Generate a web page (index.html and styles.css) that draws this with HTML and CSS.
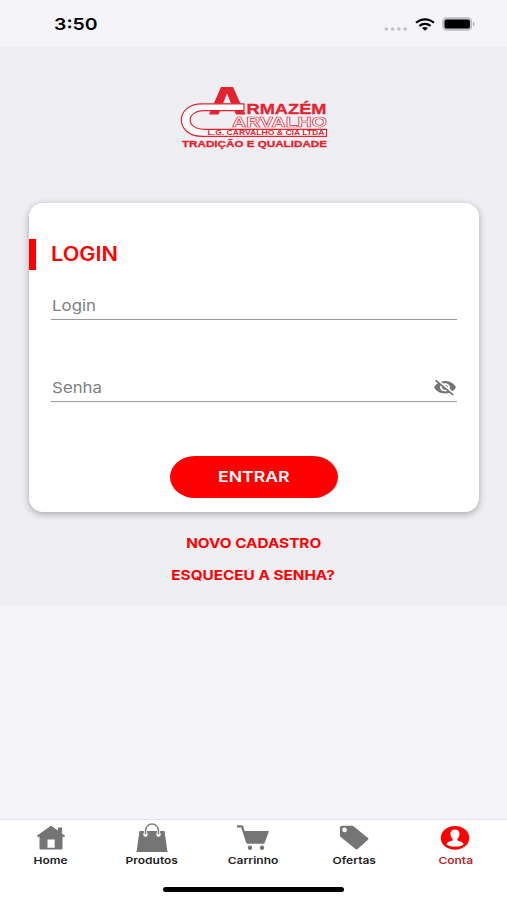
FILE: index.html
```html
<!DOCTYPE html>
<html lang="pt-BR">
<head>
    <meta charset="UTF-8" />
    <title>Login</title>
    <link rel="stylesheet" href="styles.css">
</head>
<body>
<div class="app">
    <header class="status-bar">
        <span class="time">3:50</span>
        <div class="status-icons">
            <svg class="dots" width="24" height="4" viewBox="0 0 24 4" fill="#c0c0c5">
                <circle cx="2.3" cy="2" r="1.8"/><circle cx="8.6" cy="2" r="1.8"/><circle cx="14.9" cy="2" r="1.8"/><circle cx="21.2" cy="2" r="1.8"/>
            </svg>
            <svg class="wifi" width="20" height="13" viewBox="0 0 20 13">
                <g fill="none" stroke="#000" stroke-width="2.2">
                    <path d="M1.1 4.8C6.2.1 13.8.1 18.9 4.8"/>
                    <path d="M4.4 8C7.6 5.1 12.4 5.1 15.6 8"/>
                </g>
                <path d="M7 10.1c1.8-1.6 4.2-1.6 6 0L10 12.7z"/>
            </svg>
            <svg class="battery" width="33" height="14" viewBox="0 0 33 14">
                <rect x=".8" y=".8" width="28.8" height="12.4" rx="4" fill="#c6c6ca" stroke="#bcbcc0" stroke-width="1.2"/>
                <rect x="2.5" y="2.4" width="25.4" height="9.2" rx="2.2"/>
                <path d="M31 4.7c2 .7 2 3.9 0 4.6z" fill="#b5b5ba"/>
            </svg>
        </div>
    </header>

    <main class="content">
        <svg class="logo" width="150" height="66" viewBox="0 0 150 66">
            <path d="M29 28.500L41 1h12l12.500 27.500h-9.500L53.500 22.500H41L38.500 28.500z" fill="#e32430"/>
            <path d="M43 17.500L47 7.500l4 10z" fill="#eeeef3"/>
            <path d="M64 17.800H22C-5.500 17.800-5.500 50.300 22 50.300H146.500V43.300H24C5.500 43.300 5.500 24.700 24 24.700H64z" fill="#fff" stroke="#e32430" stroke-width="1.200"/>
            <g class="logo-text">
                <text class="thick" x="66.500" y="28.300" font-size="15" textLength="80" lengthAdjust="spacingAndGlyphs">RMAZÉM</text>
                <text class="outline" x="52" y="40.800" font-size="14" textLength="95" lengthAdjust="spacingAndGlyphs">ARVALHO</text>
                <text x="27.500" y="49.400" font-size="7" textLength="117" lengthAdjust="spacingAndGlyphs">L.G. CARVALHO &amp; CIA LTDA</text>
                <text class="thick" x="2" y="60.500" font-size="9.800" textLength="145" lengthAdjust="spacingAndGlyphs">TRADIÇÃO E QUALIDADE</text>
            </g>
        </svg>

        <form class="card">
            <h1 class="title"><span>LOGIN</span></h1>
            <div class="field">
                <label>Login</label>
            </div>
            <div class="field">
                <label>Senha</label>
                <svg class="eye" width="22" height="17" viewBox="1 2 22 20.500" preserveAspectRatio="none" fill="#757575">
                    <path d="M12 7c2.760 0 5 2.240 5 5 0 .65-.13 1.260-.36 1.830l2.920 2.920c1.510-1.260 2.700-2.890 3.430-4.750-1.730-4.390-6-7.500-11-7.500-1.400 0-2.740.25-3.980.7l2.160 2.160C10.740 7.130 11.350 7 12 7zM2 4.270l2.280 2.280.46.460C3.080 8.300 1.780 10.020 1 12c1.730 4.390 6 7.500 11 7.500 1.550 0 3.030-.3 4.380-.84l.42.420L19.730 22 21 20.730 3.270 3 2 4.270zM7.530 9.800l1.550 1.550c-.05.210-.08.430-.08.650 0 1.660 1.340 3 3 3 .22 0 .44-.03.65-.08l1.550 1.550c-.67.330-1.410.530-2.200.530-2.760 0-5-2.240-5-5 0-.79.200-1.530.530-2.200zm4.310-.78l3.150 3.150.02-.16c0-1.660-1.340-3-3-3l-.17.010z"/>
                </svg>
            </div>
            <button type="button" class="submit"><span>ENTRAR</span></button>
        </form>

        <a class="link">NOVO CADASTRO</a>
        <a class="link">ESQUECEU A SENHA?</a>
    </main>

    <footer class="footer">
        <nav class="tabs">
            <a class="tab">
                <svg width="30" height="26" viewBox="0 0 30 26" fill="#757575">
                    <path fill-rule="evenodd" d="M15 .8L.8 10.800 2 12.300l1.500-.8v11.500c0 1 .5 1.500 1.400 1.500h20.200c.9 0 1.400-.5 1.400-1.500V11.500l1.500.8 1.200-1.500-3.200-2.300V2.500h-4v3zM11.500 14.500h7.200v8.200h-7.200z"/>
                </svg>
                <span>Home</span>
            </a>
            <a class="tab">
                <svg width="32" height="30" viewBox="0 0 32 30">
                    <path d="M3.500 8h25L31.500 29H.5z" fill="#757575"/>
                    <path d="M9.500 11.500V8c0-9.300 13-9.300 13 0v3.500" fill="none" stroke="#fff" stroke-width="3.200"/>
                    <circle cx="9.500" cy="11.500" r="2.200" fill="#fff"/><circle cx="22.500" cy="11.500" r="2.200" fill="#fff"/>
                    <path d="M9.500 11.500V8c0-9.300 13-9.300 13 0v3.500" fill="none" stroke="#858585" stroke-width="1.600"/>
                </svg>
                <span>Produtos</span>
            </a>
            <a class="tab">
                <svg width="34" height="28" viewBox="0 0 34 28" fill="#757575">
                    <path d="M1 1.200h4.500c1 0 1.600.5 1.900 1.500L8.700 7H33l-4.200 11.500c-.3.800-.8 1.200-1.700 1.200H12c-1 0-1.600-.4-1.900-1.300L5.200 3.600H1z"/>
                    <circle cx="14" cy="23.700" r="2.200"/><circle cx="26" cy="23.700" r="2.200"/>
                </svg>
                <span>Carrinho</span>
            </a>
            <a class="tab">
                <svg width="30" height="26" viewBox="0 0 30 26">
                    <path d="M3.500.8h9.200c1 0 1.700.3 2.500.9L29 13c.7.6.7 1.200 0 1.800L18.600 24c-.7.600-1.400.6-2.100 0L2 12.200c-.8-.7-1.100-1.300-1.100-2.200V3C.9 1.600 1.900.8 3.500.8z" fill="#757575"/>
                    <circle cx="5.600" cy="4.900" r="2.300" fill="#fff"/>
                </svg>
                <span>Ofertas</span>
            </a>
            <a class="tab active">
                <svg width="30" height="26" viewBox="0 0 30 26">
                    <ellipse cx="15" cy="12.900" rx="14.200" ry="11.900" fill="#f00"/>
                    <path d="M15 4.600c3.100 0 4.700 2 4.500 4.500-.1 2.100-.9 3.400-2 4.600-.4 1.400.1 1.800 1.200 2.200 2.800.8 4.600 1.500 4.800 3.600-4.300 2.900-12.700 2.900-17 0 .2-2.100 2-2.800 4.800-3.600 1.100-.4 1.600-.8 1.200-2.200-1.100-1.200-1.900-2.500-2-4.600-.2-2.500 1.400-4.500 4.500-4.500z" fill="#fff"/>
                </svg>
                <span>Conta</span>
            </a>
        </nav>
        <div class="home-indicator"></div>
    </footer>
</div>
</body>
</html>
```
FILE: styles.css
```css
body {
    margin: 0;
    font-family: Inter, "Liberation Sans", sans-serif;
    background: #f4f4f9;
}

.app {
    display: flex;
    flex-direction: column;
    height: 900px;
    overflow: hidden;
}

.status-bar {
    display: flex;
    justify-content: space-between;
    box-sizing: border-box;
    height: 47px;
    padding: 14px 32px 0 53.5px;
}

.time {
    font-size: 16.5px;
    font-weight: 600;
    line-height: 21px;
    transform: scaleX(1.18);
    transform-origin: left;
}

.status-icons {
    display: flex;
    align-items: flex-start;
}

.dots {
    margin: 12.5px 7px 0 0;
}

.wifi {
    margin: 4px 7px 0 0;
}

.battery {
    margin-top: 3px;
}

.content {
    display: flex;
    flex-direction: column;
    align-items: center;
    box-sizing: border-box;
    height: 559px;
    padding-top: 39px;
    background: #eeeef3;
}

.logo {
    margin-left: 3px;
}

.logo-text {
    fill: #e32430;
    font-family: "Liberation Sans", Arial, sans-serif;
    font-weight: 700;
}

.thick {
    stroke: #e32430;
    stroke-width: 0.3px;
}

.outline {
    fill: #fff;
    stroke: #e32430;
    stroke-width: 0.6px;
}

.card {
    display: flex;
    flex-direction: column;
    box-sizing: border-box;
    width: 450px;
    height: 309px;
    margin: 51px 0 14.5px;
    padding: 36px 22px 0;
    background: #fff;
    border-radius: 14px;
    box-shadow: 0 2px 7px rgba(0, 0, 0, 0.3);
}

.title {
    height: 31px;
    margin: 0 0 15px -22px;
    padding-left: 14.5px;
    border-left: 7.5px solid #f00;
    color: #f00;
    font-size: 19.5px;
    font-weight: 600;
    line-height: 30px;
}

.title span {
    display: inline-block;
    margin-left: 0.5px;
    transform: scaleX(1.11);
    transform-origin: left;
}

.field {
    display: flex;
    justify-content: space-between;
    box-sizing: border-box;
    height: 35px;
    margin-bottom: 47px;
    border-bottom: 1.5px solid #9a9a9a;
}

.field label {
    padding-left: 1px;
    color: #808080;
    font-size: 15px;
    line-height: 41px;
    transform: scaleX(1.12);
    transform-origin: left;
}

.eye {
    margin: 12px 1px 0 0;
}

.submit {
    align-self: center;
    width: 168px;
    height: 42px;
    margin-top: 7px;
    padding: 0;
    border: none;
    border-radius: 25px / 21px;
    background: #f00;
    color: #fff;
    font: 600 14.7px/43px Inter, sans-serif;
}

.submit span {
    display: inline-block;
    transform: scaleX(1.2);
}

.link {
    color: #f00;
    font-size: 13.3px;
    font-weight: 700;
    line-height: 32px;
    transform: scaleX(1.15);
}

.footer {
    box-sizing: border-box;
    height: 80px;
    margin-top: auto;
    background: #fff;
    box-shadow: 0 0 2px rgba(0, 0, 0, 0.2);
}

.tabs {
    display: flex;
    height: 67px;
    padding: 0 1px 0 0;
}

.tab {
    display: flex;
    flex: 1;
    flex-direction: column;
    align-items: center;
    color: #1c1c1e;
    font-size: 9.5px;
    font-weight: 600;
}

.tab svg {
    height: 30px;
    margin-top: 3px;
}

.tab span {
    line-height: 15px;
    transform: scaleX(1.26);
}

.tab.active {
    color: #b52a2a;
}

.home-indicator {
    width: 181px;
    height: 5px;
    margin: 0 auto;
    border-radius: 3px;
    background: #000;
}
```
